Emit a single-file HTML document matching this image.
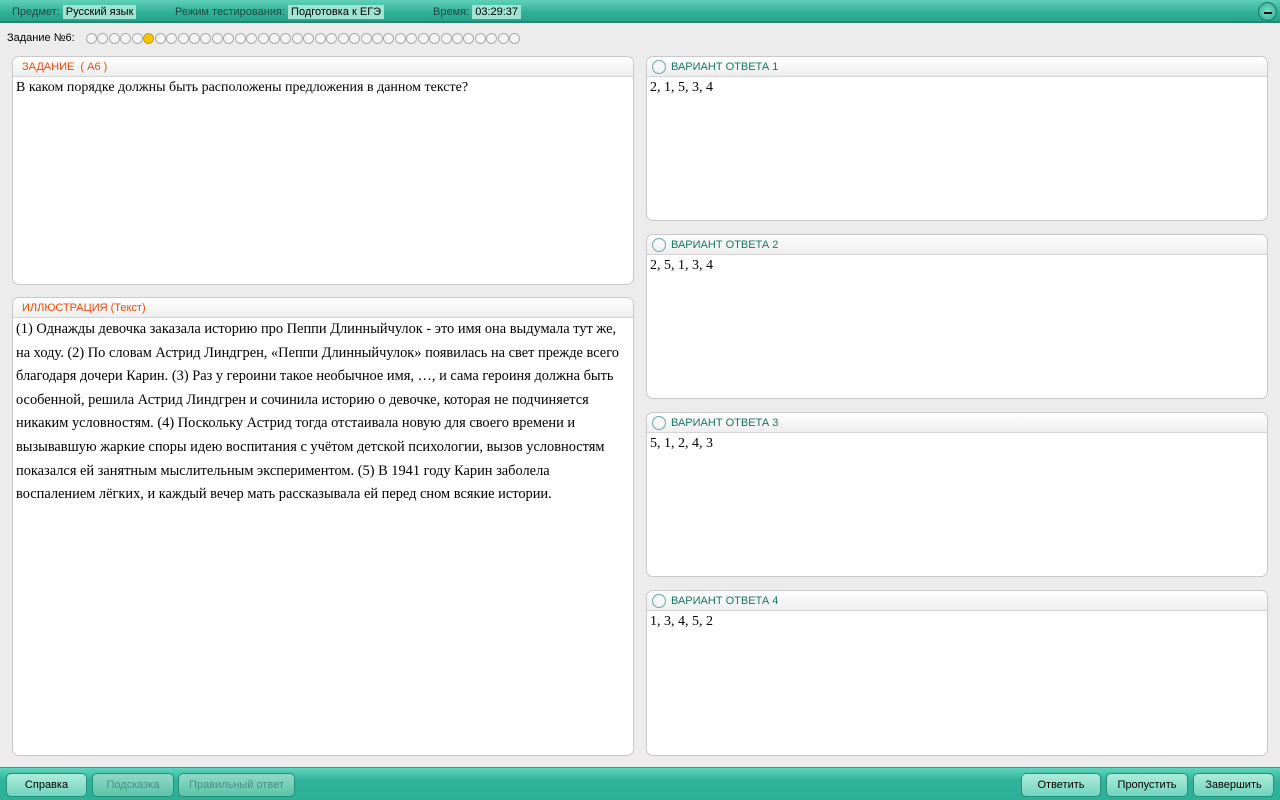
<!DOCTYPE html>
<html><head><meta charset="utf-8"><style>
*{margin:0;padding:0;box-sizing:border-box}
body{width:1280px;height:800px;background:#ececec;font-family:"Liberation Sans",sans-serif;position:relative;overflow:hidden}
.top{position:absolute;left:0;top:0;width:1280px;height:23px;background:linear-gradient(#5fd0b8,#2fb096 60%,#28a48b);border-bottom:2px solid #1e8a74}
.top span{position:absolute;top:6px;font-size:11px;color:#1d4a40}
.top b{font-weight:normal;background:#9fe3d3;color:#000;padding:1px 3px}
.min{position:absolute;right:3px;top:2px;width:19px;height:19px;border-radius:50%;background:radial-gradient(#7ee0c9,#2aa58b);border:1px solid #1b7d68}
.min:after{content:"";position:absolute;left:5px;top:9px;width:8px;height:2px;background:#111}
.task{position:absolute;left:7px;top:32px;font-size:11px;color:#000}
.dots{position:absolute;left:86px;top:33px;display:flex}
.dots i{width:11px;height:11px;border:1px solid #aaa;border-radius:50%;margin-right:0.45px;background:#f4f4f4}
.dots i.y{background:#f4c400;border-color:#d0a000}
.p{position:absolute;background:#fff;border:1px solid #c9c9c9;border-radius:7px;overflow:hidden}
.h{height:20px;background:linear-gradient(#fff,#eee);border-bottom:1px solid #d4d4d4;font-size:11px;padding:4px 9px 0;color:#f04a00}
.g .h{color:#117a60;padding-left:24px;position:relative}
.g .h:before{content:"";position:absolute;left:5px;top:3px;width:12px;height:12px;border:1px solid #6aa;border-radius:50%}
.c{font-family:"Liberation Serif",serif;font-size:14px;padding:3px 3px;color:#000}
.ill{line-height:23.6px;font-size:14.4px;padding-top:0;white-space:nowrap}
.bot{position:absolute;left:0;top:767px;width:1280px;height:33px;background:linear-gradient(#5ed4bb,#30b29a 40%,#2eaf97);border-top:1px solid #2a9a83}
.b{position:absolute;top:5px;height:24px;border:1px solid #239078;border-radius:5px;background:linear-gradient(#aeecdc,#6fd4bc);font-size:11px;text-align:center;line-height:22px;color:#000}
.b.d{color:#4a8f80;background:linear-gradient(#8fd9c6,#5cc3aa)}
</style></head><body>
<div class="top">
<span style="left:12px">Предмет: <b>Русский язык</b></span>
<span style="left:175px">Режим тестирования: <b>Подготовка к ЕГЭ</b></span>
<span style="left:433px">Время: <b>03:29:37</b></span>
<div class="min"></div>
</div>
<div class="task">Задание №6:</div>
<div class="dots"><i></i><i></i><i></i><i></i><i></i><i class="y"></i><i></i><i></i><i></i><i></i><i></i><i></i><i></i><i></i><i></i><i></i><i></i><i></i><i></i><i></i><i></i><i></i><i></i><i></i><i></i><i></i><i></i><i></i><i></i><i></i><i></i><i></i><i></i><i></i><i></i><i></i><i></i><i></i></div>
<div class="p" style="left:12px;top:56px;width:622px;height:229px"><div class="h">ЗАДАНИЕ &nbsp;( А6 )</div><div class="c">В каком порядке должны быть расположены предложения в данном тексте?</div></div>
<div class="p" style="left:12px;top:297px;width:622px;height:459px"><div class="h">ИЛЛЮСТРАЦИЯ (Текст)</div><div class="c ill">(1) Однажды девочка заказала историю про Пеппи Длинныйчулок - это имя она выдумала тут же,<br>на ходу. (2) По словам Астрид Линдгрен, «Пеппи Длинныйчулок» появилась на свет прежде всего<br>благодаря дочери Карин. (3) Раз у героини такое необычное имя, …, и сама героиня должна быть<br>особенной, решила Астрид Линдгрен и сочинила историю о девочке, которая не подчиняется<br>никаким условностям. (4) Поскольку Астрид тогда отстаивала новую для своего времени и<br>вызывавшую жаркие споры идею воспитания с учётом детской психологии, вызов условностям<br>показался ей занятным мыслительным экспериментом. (5) В 1941 году Карин заболела<br>воспалением лёгких, и каждый вечер мать рассказывала ей перед сном всякие истории.</div></div>
<div class="p g" style="left:646px;top:56px;width:622px;height:165px"><div class="h">ВАРИАНТ ОТВЕТА 1</div><div class="c">2, 1, 5, 3, 4</div></div>
<div class="p g" style="left:646px;top:234px;width:622px;height:165px"><div class="h">ВАРИАНТ ОТВЕТА 2</div><div class="c">2, 5, 1, 3, 4</div></div>
<div class="p g" style="left:646px;top:412px;width:622px;height:165px"><div class="h">ВАРИАНТ ОТВЕТА 3</div><div class="c">5, 1, 2, 4, 3</div></div>
<div class="p g" style="left:646px;top:590px;width:622px;height:166px"><div class="h">ВАРИАНТ ОТВЕТА 4</div><div class="c">1, 3, 4, 5, 2</div></div>
<div class="bot">
<div class="b" style="left:6px;width:81px">Справка</div>
<div class="b d" style="left:92px;width:82px">Подсказка</div>
<div class="b d" style="left:178px;width:117px">Правильный ответ</div>
<div class="b" style="left:1021px;width:80px">Ответить</div>
<div class="b" style="left:1106px;width:82px">Пропустить</div>
<div class="b" style="left:1193px;width:81px">Завершить</div>
</div>
</body></html>
